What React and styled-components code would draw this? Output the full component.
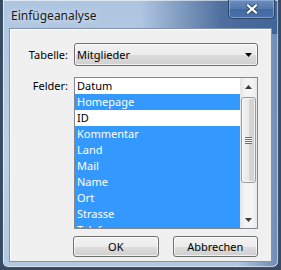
import React from 'react'
import styled, { createGlobalStyle } from 'styled-components'

const GlobalStyle = createGlobalStyle`
  html, body {
    margin: 0;
    padding: 0;
    background: #3a4a5e;
  }
  body {
    font-family: 'Noto Sans', 'Liberation Sans', sans-serif;
    font-size: 11px;
    color: #000;
  }
`

const fields = [
  { name: 'Datum', selected: false },
  { name: 'Homepage', selected: true },
  { name: 'ID', selected: false },
  { name: 'Kommentar', selected: true },
  { name: 'Land', selected: true },
  { name: 'Mail', selected: true },
  { name: 'Name', selected: true },
  { name: 'Ort', selected: true },
  { name: 'Strasse', selected: true },
  { name: 'Telefon', selected: true },
]

function App() {
  return (
    <Page>
      <GlobalStyle />
      <Window>
        <TitleBar>
          <Title>Einfügeanalyse</Title>
          <CloseButton aria-label="Schließen">
            <svg width="12" height="10" viewBox="0 0 12 10">
              <path d="M2 1.5 L10 8.5 M10 1.5 L2 8.5" stroke="#33496b" strokeWidth="4" strokeLinecap="square" />
              <path d="M2 1.5 L10 8.5 M10 1.5 L2 8.5" stroke="#ffffff" strokeWidth="2.2" strokeLinecap="square" />
            </svg>
          </CloseButton>
        </TitleBar>

        <Client>
          <Form>
            <Label>Tabelle:</Label>
            <Combo>
              <span>Mitglieder</span>
              <svg width="7" height="4" viewBox="0 0 7 4">
                <path d="M0 0 H7 L3.5 4 Z" fill="#000" />
              </svg>
            </Combo>

            <Label $top>Felder:</Label>
            <ListBox>
              <Items>
                {fields.map((f) => (
                  <Item key={f.name} $selected={f.selected}>{f.name}</Item>
                ))}
              </Items>
              <ScrollBar>
                <ArrowCell>
                  <svg width="7" height="4" viewBox="0 0 7 4">
                    <path d="M0 4 H7 L3.5 0 Z" fill="#3c3c3c" />
                  </svg>
                </ArrowCell>
                <Track>
                  <Thumb>
                    <Grip />
                  </Thumb>
                </Track>
                <ArrowCell>
                  <svg width="7" height="4" viewBox="0 0 7 4">
                    <path d="M0 0 H7 L3.5 4 Z" fill="#3c3c3c" />
                  </svg>
                </ArrowCell>
              </ScrollBar>
            </ListBox>

            <span />
            <Buttons>
              <Button>OK</Button>
              <Button>Abbrechen</Button>
            </Buttons>
          </Form>
        </Client>
      </Window>
    </Page>
  )
}

const Page = styled.div`
  width: 281px;
  height: 270px;
  overflow: hidden;
  padding-left: 2px;
  box-sizing: border-box;
`

const Window = styled.div`
  width: 277px;
  height: 268px;
  box-sizing: border-box;
  border: 1px solid #3b5374;
  border-top: none;
  border-radius: 0 0 6px 6px;
  background:
    linear-gradient(to right, rgba(190, 210, 234, 0) 50%, rgba(66, 100, 150, 0.9) 80%, rgba(60, 95, 148, 0.95) 100%) top / 100% 34px no-repeat,
    linear-gradient(to right, rgba(190, 210, 234, 0) 85%, rgba(80, 112, 160, 0.7) 100%) 0 34px / 100% 100% no-repeat,
    linear-gradient(to bottom, #aec5e0 0%, #bccfe6 60%, #b3c7e0 100%);
  box-shadow: inset 1px 1px 0 rgba(255, 255, 255, 0.6), inset -1px -1px 0 rgba(255, 255, 255, 0.5);
  display: flex;
  flex-direction: column;
  padding: 0 6px 5px 6px;
`

const TitleBar = styled.div`
  height: 28px;
  display: flex;
  align-items: flex-start;
  justify-content: space-between;
  flex-shrink: 0;
`

const Title = styled.div`
  padding: 7px 0 0 2px;
  font-size: 12px;
  color: #1a1a1a;
  text-shadow: 0 0 6px rgba(255, 255, 255, 0.9);
`

const CloseButton = styled.div`
  width: 47px;
  height: 19px;
  margin-right: -3px;
  box-sizing: border-box;
  border: 1px solid #2d4566;
  border-top: none;
  border-radius: 0 0 5px 5px;
  background: linear-gradient(to bottom, #6b8dbd 0%, #5479ae 50%, #4268a0 51%, #4a71a8 100%);
  box-shadow: inset 0 0 0 1px rgba(170, 195, 230, 0.55);
  display: flex;
  align-items: center;
  justify-content: center;
`

const Client = styled.div`
  flex: 1;
  background: #f0f0f0;
  border: 1px solid #7f93ad;
  box-shadow: inset 1px 1px 0 #ffffff;
  padding: 14px 0 0 0;
`

const Form = styled.div`
  display: grid;
  grid-template-columns: 58px 184px;
  column-gap: 6px;
  row-gap: 11px;
  align-items: center;
`

const Label = styled.div`
  text-align: right;
  align-self: ${(p) => (p.$top ? 'start' : 'center')};
  padding-top: ${(p) => (p.$top ? '1px' : '0')};
  line-height: 16px;
`

const Combo = styled.div`
  height: 23px;
  box-sizing: border-box;
  border: 1px solid #707070;
  border-radius: 3px;
  background: linear-gradient(to bottom, #f2f2f2 0%, #ebebeb 50%, #dddddd 51%, #cfcfcf 100%);
  box-shadow: inset 0 0 0 1px rgba(255, 255, 255, 0.7);
  display: flex;
  align-items: center;
  justify-content: space-between;
  padding: 0 5px 0 2px;
`

const ListBox = styled.div`
  height: 152px;
  box-sizing: border-box;
  border: 1px solid #828790;
  background: #fff;
  display: flex;
  overflow: hidden;
`

const Items = styled.div`
  flex: 1;
  overflow: hidden;
`

const Item = styled.div`
  height: 16px;
  line-height: 16px;
  padding-left: 2px;
  background: ${(p) => (p.$selected ? '#3399ff' : '#ffffff')};
  color: ${(p) => (p.$selected ? '#ffffff' : '#000000')};
  white-space: nowrap;
`

const ScrollBar = styled.div`
  width: 17px;
  flex-shrink: 0;
  display: flex;
  flex-direction: column;
  background: linear-gradient(to right, #e5e5e5, #f4f4f4 30%, #f4f4f4 70%, #e8e8e8);
`

const ArrowCell = styled.div`
  height: 17px;
  display: flex;
  align-items: center;
  justify-content: center;
  flex-shrink: 0;
`

const Track = styled.div`
  flex: 1;
  padding-top: 2px;
`

const Thumb = styled.div`
  height: 86px;
  margin: 0 1px;
  box-sizing: border-box;
  border: 1px solid #9b9b9b;
  border-radius: 3px;
  background: linear-gradient(to right, #f3f3f3 0%, #e9e9e9 50%, #d8d8d8 51%, #d0d0d0 100%);
  box-shadow: inset 0 0 0 1px rgba(255, 255, 255, 0.7);
  display: flex;
  align-items: center;
  justify-content: center;
`

const Grip = styled.div`
  width: 7px;
  height: 7px;
  background: repeating-linear-gradient(to bottom, #6e6e6e 0 1px, #f8f8f8 1px 2px);
`

const Buttons = styled.div`
  display: flex;
  gap: 14px;
  margin-top: -4px;
  margin-left: -1px;
`

const Button = styled.div`
  width: 86px;
  height: 21px;
  box-sizing: border-box;
  border: 1px solid #707070;
  border-radius: 3px;
  background: linear-gradient(to bottom, #f2f2f2 0%, #ebebeb 50%, #dddddd 51%, #cfcfcf 100%);
  box-shadow: inset 0 0 0 1px rgba(255, 255, 255, 0.7);
  display: flex;
  align-items: center;
  justify-content: center;
`

export default App
